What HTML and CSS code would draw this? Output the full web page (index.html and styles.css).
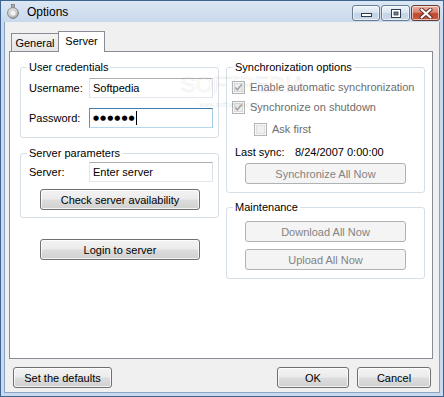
FILE: index.html
```html
<!DOCTYPE html>
<html>
<head>
<meta charset="utf-8">
<title>Options</title>
<link rel="stylesheet" href="styles.css">
</head>
<body>
<div class="window">
  <div class="titlebar">
    <svg class="app-icon" viewBox="0 0 12 15" width="12" height="15">
      <defs>
        <radialGradient id="ic" cx="0.4" cy="0.35" r="0.7">
          <stop offset="0" stop-color="#ffffff"/>
          <stop offset="0.6" stop-color="#d4d4d4"/>
          <stop offset="1" stop-color="#8a8a8a"/>
        </radialGradient>
      </defs>
      <rect x="4.5" y="0.5" width="3" height="2.5" fill="#b8b8b8" stroke="#7a7a7a" stroke-width="0.8"/>
      <circle cx="6" cy="9" r="5.4" fill="url(#ic)" stroke="#7c7c7c" stroke-width="0.9"/>
      <circle cx="6" cy="9" r="3.2" fill="#f2f2f2" stroke="#a8a8a8" stroke-width="0.6"/>
    </svg>
    <span class="title">Options</span>
    <div class="caption">
      <div class="cbtn cbtn-min"><span class="min-glyph"></span></div>
      <div class="cbtn cbtn-max">
        <svg viewBox="0 0 10 9" width="10" height="9">
          <rect x="0.5" y="0.5" width="9" height="8" fill="#fff" stroke="#2f3d50"/>
          <rect x="3" y="3" width="4" height="3" fill="#6e8097" stroke="#2f3d50" stroke-width="0.8"/>
        </svg>
      </div>
      <div class="cbtn cbtn-close">
        <svg viewBox="0 0 14 11" width="14" height="11">
          <path d="M2.5 1.5 L11.5 9.5 M11.5 1.5 L2.5 9.5" stroke="#5a2a22" stroke-width="4" stroke-linecap="round"/>
          <path d="M2.5 1.5 L11.5 9.5 M11.5 1.5 L2.5 9.5" stroke="#ffffff" stroke-width="2.2" stroke-linecap="round"/>
        </svg>
      </div>
    </div>
  </div>

  <div class="client">
    <div class="tabs">
      <div class="tab">General</div>
      <div class="tab tab-active">Server</div>
    </div>

    <div class="panel">
      <div class="col">
        <fieldset class="group creds">
          <legend>User credentials</legend>
          <div class="field-row">
            <span class="field-label">Username:</span>
            <div class="input">Softpedia</div>
          </div>
          <div class="field-row">
            <span class="field-label">Password:</span>
            <div class="input input-focus"><span class="dots">●●●●●●</span><span class="caret"></span></div>
          </div>
        </fieldset>

        <fieldset class="group server">
          <legend>Server parameters</legend>
          <div class="field-row">
            <span class="field-label">Server:</span>
            <div class="input">Enter server</div>
          </div>
          <button class="btn btn-wide check-btn">Check server availability</button>
        </fieldset>

        <button class="btn btn-wide login-btn">Login to server</button>
      </div>

      <div class="col">
        <fieldset class="group sync">
          <legend>Synchronization options</legend>
          <div class="check-row">
            <svg class="cb" viewBox="0 0 13 13" width="13" height="13">
              <rect x="0.5" y="0.5" width="12" height="12" fill="#f7f7f7" stroke="#b4b4b4"/>
              <rect x="2.5" y="2.5" width="8" height="8" fill="#ececec" stroke="#dadada"/>
              <path d="M3.3 6.4 L5.4 8.8 L9.7 3.4" fill="none" stroke="#a2a2a2" stroke-width="1.5"/>
            </svg>
            <span>Enable automatic synchronization</span>
          </div>
          <div class="check-row">
            <svg class="cb" viewBox="0 0 13 13" width="13" height="13">
              <rect x="0.5" y="0.5" width="12" height="12" fill="#f7f7f7" stroke="#b4b4b4"/>
              <rect x="2.5" y="2.5" width="8" height="8" fill="#ececec" stroke="#dadada"/>
              <path d="M3.3 6.4 L5.4 8.8 L9.7 3.4" fill="none" stroke="#a2a2a2" stroke-width="1.5"/>
            </svg>
            <span>Synchronize on shutdown</span>
          </div>
          <div class="check-row check-indent">
            <svg class="cb" viewBox="0 0 13 13" width="13" height="13">
              <rect x="0.5" y="0.5" width="12" height="12" fill="#f7f7f7" stroke="#b4b4b4"/>
              <rect x="2.5" y="2.5" width="8" height="8" fill="#f0f0f0" stroke="#e0e0e0"/>
            </svg>
            <span>Ask first</span>
          </div>
          <div class="sync-row">
            <span class="sync-label">Last sync:</span>
            <span>8/24/2007 0:00:00</span>
          </div>
          <button class="btn btn-disabled btn-right">Synchronize All Now</button>
        </fieldset>

        <fieldset class="group maint">
          <legend>Maintenance</legend>
          <button class="btn btn-disabled btn-right">Download All Now</button>
          <button class="btn btn-disabled btn-right">Upload All Now</button>
        </fieldset>
      </div>
    </div>

    <div class="footer">
      <button class="btn defaults-btn">Set the defaults</button>
      <div class="footer-right">
        <button class="btn ok-btn">OK</button>
        <button class="btn cancel-btn">Cancel</button>
      </div>
    </div>
  </div>

  <div class="watermark">
    <div class="wm-big">SOFTPEDIA</div>
    <div class="wm-small">www.softpedia.com</div>
  </div>
</div>
</body>
</html>
```

FILE: styles.css
```css
* { box-sizing: border-box; }

html, body {
  margin: 0;
  padding: 0;
}

body {
  width: 444px;
  height: 397px;
  overflow: hidden;
  font-family: "Liberation Sans", Arial, sans-serif;
  font-size: 11px;
  color: #000;
  background: #ffffff;
}

.window {
  position: relative;
  width: 444px;
  height: 397px;
  border: 1px solid #3d6590;
  background: #c9daee;
  display: flex;
  flex-direction: column;
}

/* ---------- title bar ---------- */
.titlebar {
  height: 21px;
  flex: none;
  display: flex;
  align-items: center;
  padding: 0 3px 0 6px;
  background: linear-gradient(#dce7f4, #c8d9ec);
}

.app-icon {
  flex: none;
  display: block;
}

.title {
  margin-left: 8px;
  font-size: 12px;
  color: #000;
}

.caption {
  margin-left: auto;
  align-self: flex-start;
  margin-top: 4px;
  display: flex;
}

.cbtn {
  height: 16px;
  border: 1px solid #6a7c93;
  border-radius: 3px;
  display: flex;
  align-items: center;
  justify-content: center;
  background: linear-gradient(#eef3f9 0%, #dbe5f1 45%, #c4d3e5 55%, #ccdaea 100%);
  box-shadow: inset 0 0 0 1px rgba(255,255,255,0.6);
}

.cbtn-min {
  width: 28px;
  align-items: flex-end;
  padding-bottom: 3px;
}

.min-glyph {
  display: block;
  width: 11px;
  height: 4px;
  background: #fff;
  border: 1px solid #2f3d50;
}

.cbtn-max {
  width: 29px;
  margin-left: 1px;
}

.cbtn-max svg, .cbtn-close svg { display: block; }

.cbtn-close {
  width: 29px;
  margin-left: 1px;
  border-color: #6b3b31;
  background: linear-gradient(#eab3a5 0%, #d9826c 45%, #c0472f 55%, #c95b3f 100%);
}

/* ---------- client ---------- */
.client {
  flex: 1;
  margin: 0 3px 3px;
  border: 1px solid #89a4c3;
  border-top: none;
  background: #f0f0f0;
  display: flex;
  flex-direction: column;
}

.tabs {
  height: 29px;
  flex: none;
  display: flex;
  align-items: flex-end;
  padding-left: 6px;
}

.tab {
  width: 48px;
  height: 18px;
  border: 1px solid #898c95;
  border-bottom: none;
  background: linear-gradient(#f3f3f3, #e6e6e6);
  text-align: center;
  padding-top: 2px;
  line-height: 14px;
}

.tab-active {
  position: relative;
  z-index: 1;
  width: 47px;
  height: 21px;
  margin-left: -1px;
  margin-bottom: -1px;
  background: #ffffff;
}

.panel {
  flex: none;
  margin-left: 4px;
  width: 424px;
  height: 308px;
  border: 1px solid #898c95;
  background: #ffffff;
  padding: 9px 0 0 10px;
  display: grid;
  grid-template-columns: 199px 199px;
  column-gap: 7px;
  align-items: start;
}

.col {
  display: flex;
  flex-direction: column;
  align-items: flex-start;
}

/* ---------- group boxes ---------- */
.group {
  margin: 0;
  width: 199px;
  min-width: 0;
  border: 1px solid #d5dfe5;
  border-radius: 3px;
  padding: 4px 5px 9px 8px;
  display: flex;
  flex-direction: column;
  align-items: flex-start;
}

.group legend {
  padding: 0 2px;
  margin-left: -2px;
  line-height: 13px;
  font-size: 11px;
}

.server {
  margin-top: 9px;
  padding: 2px 5px 7px 8px;
}

.sync {
  padding: 3px 5px 8px 8px;
}

.maint {
  margin-top: 8px;
  padding: 7px 5px 8px 8px;
}

.field-row {
  display: flex;
  align-items: center;
  height: 20px;
}

.creds .field-row + .field-row {
  margin-top: 10px;
}

.field-label {
  width: 60px;
  flex: none;
}

.input {
  width: 124px;
  height: 20px;
  border: 1px solid;
  border-color: #abadb3 #dbdfe6 #e3e9ef #e2e3ea;
  background: #fff;
  padding: 0 3px;
  display: flex;
  align-items: center;
  white-space: nowrap;
}

.input-focus {
  border-color: #3d7bad #a4c9e3 #b7d9ed #5d90bd;
}

.dots {
  font-family: "DejaVu Sans", sans-serif;
  font-size: 7px;
  letter-spacing: 1px;
}

.caret {
  display: block;
  width: 1px;
  height: 14px;
  margin-left: 0px;
  background: #000;
}

/* ---------- buttons ---------- */
.btn {
  height: 21px;
  padding: 0;
  margin: 0;
  border: 1px solid #707070;
  border-radius: 3px;
  background: linear-gradient(#f3f3f3 0%, #ebebeb 48%, #dddddd 52%, #d0d0d0 100%);
  box-shadow: inset 0 0 0 1px rgba(255,255,255,0.75);
  font-family: "Liberation Sans", Arial, sans-serif;
  font-size: 11px;
  color: #000;
  display: flex;
  align-items: center;
  justify-content: center;
  white-space: nowrap;
}

.btn-wide {
  width: 160px;
}

.check-btn {
  margin-top: 7px;
  margin-left: 11px;
}

.login-btn {
  margin-top: 21px;
  margin-left: 20px;
}

.btn-disabled {
  border-color: #adb2b5;
  background: #f4f4f4;
  box-shadow: none;
  color: #838383;
}

.btn-right {
  width: 161px;
  margin-left: 10px;
}

.sync .btn-right {
  margin-top: 1px;
}

.maint .btn-right + .btn-right {
  margin-top: 7px;
}

/* ---------- sync rows ---------- */
.check-row {
  display: flex;
  align-items: center;
  height: 20px;
  margin-left: -3px;
  gap: 5px;
  color: #6d6d6d;
}

.check-row .cb {
  display: block;
  flex: none;
}

.check-indent {
  margin-left: 19px;
  margin-top: 2px;
}

.sync-row {
  display: flex;
  align-items: center;
  height: 20px;
  margin-top: 3px;
}

.sync-label {
  width: 60px;
  flex: none;
}

/* ---------- footer ---------- */
.footer {
  flex: none;
  margin-top: 8px;
  padding: 0 8px;
  display: flex;
  align-items: center;
  justify-content: space-between;
}

.defaults-btn { width: 99px; }

.footer-right {
  display: flex;
  gap: 8px;
}

.ok-btn { width: 72px; }
.cancel-btn { width: 74px; }

/* ---------- watermark overlay ---------- */
.watermark {
  position: absolute;
  left: 180px;
  top: 74px;
  pointer-events: none;
  z-index: 5;
}

.wm-big {
  font-family: "Liberation Sans", Arial, sans-serif;
  font-size: 22px;
  line-height: 20px;
  color: rgba(255,255,255,0.15);
  -webkit-text-stroke: 1px rgba(0,0,0,0.08);
}

.wm-small {
  margin-top: 6px;
  margin-left: 18px;
  font-family: "Liberation Sans", Arial, sans-serif;
  font-size: 7px;
  line-height: 8px;
  color: rgba(0,0,0,0.12);
}
```
